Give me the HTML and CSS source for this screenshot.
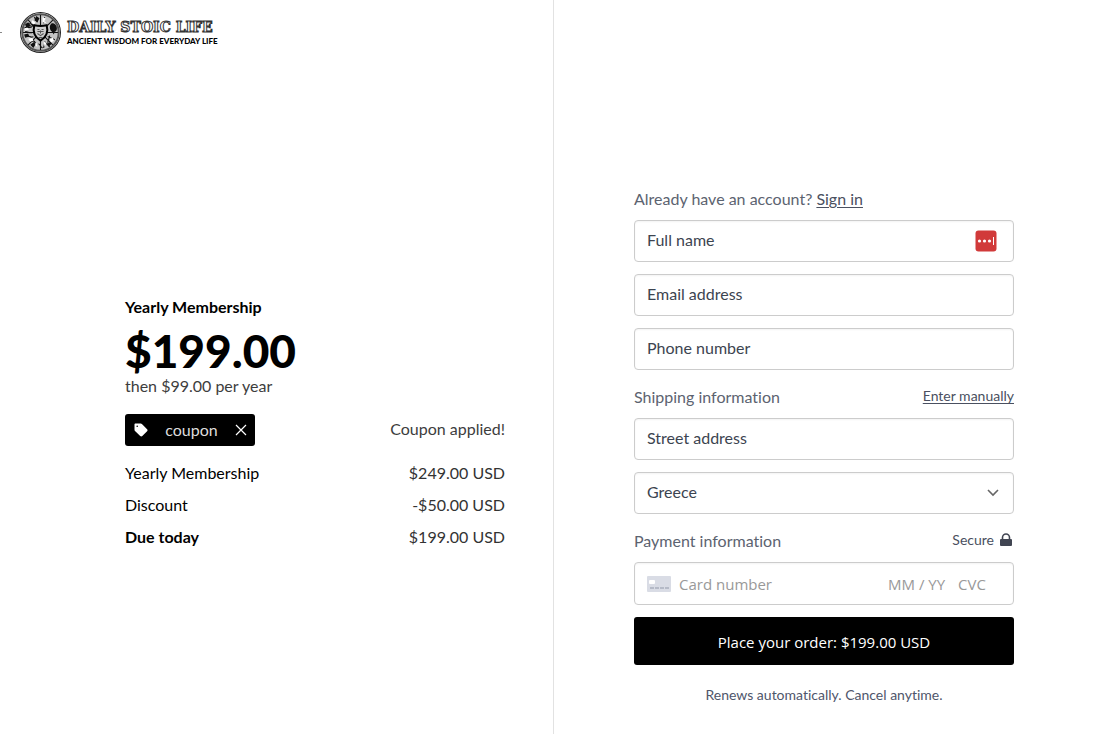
FILE: index.html
```html
<!DOCTYPE html>
<html lang="en">
  <head>
    <meta charset="UTF-8" />
    <meta name="viewport" content="width=device-width, initial-scale=1.0" />
    <title>Daily Stoic Life - Checkout</title>
    <link rel="stylesheet" href="styles.css">
  </head>
  <body>
    <div class="checkout">
      <!-- Order summary -->
      <section class="summary">
        <header class="brand">
          <span class="brand-mark"></span>
          <svg class="brand-seal" viewBox="0 0 40 40" aria-hidden="true">
            <circle cx="20" cy="20" r="19.5" fill="#fff" stroke="#222" stroke-width="1"/>
            <circle cx="20" cy="20" r="17.8" fill="#c4c4c4" stroke="#555" stroke-width="2"/>
            <g fill="none" stroke="#111" stroke-width="1.1">
              <path d="M20 3v10M20 27v10M3 20h11M26 20h11M8 8l8 8M32 8l-8 8M8 32l8-8M32 32l-8-8"/>
              <path d="M4 16c3-3 5 1 8-2M6 24c3-2 4 2 7 0M11 29c2-2 5 0 4 4M9 11c3 0 2 3 5 3M24 29l5 5M27 24l7 3M29 23l-2 7"/>
              <path d="M14 5l3 5M24 5l-1 6M18 31c3 1 1 3 4 4M24 31l-1 4M5 19c3 0 4 2 7 1"/>
            </g>
            <g fill="#fff">
              <path d="M22 5l3 1-1 3 2 2-4-1zM12 8l3 2-1 2-3-1zM4 16l3-1 2 2-4 1zM8 26l4-1 1 3-3 1zM13 32l3-2 1 4zM23 29l3 1-2 4zM29 26l3-1 1 3-3 2z"/>
            </g>
            <g fill="#111">
              <path d="M31 11c3 0 5 2 5 5 0 2-1 3-2 3l-1 3-2-3c-2-1-3-6 0-8z"/>
              <path d="M16 4l3 2-2 4-3-2zM5 12l3-2 3 4-5 1zM4 22l4-1 1 3-4 1zM10 32l4-3 1 3-2 3zM26 31l4-2 1 2-3 3z"/>
            </g>
            <path d="M14 13c4 1 8 1 12 0 2 7-1 12-6 15-5-3-8-8-6-15z" fill="#ccc" stroke="#000" stroke-width="2"/>
            <path d="M17 17h2M21 17h2M20 18v3M17 21l3 2 3-2M18 25h4M17 19h6" fill="none" stroke="#555"/>
          </svg>
          <div class="brand-text">
            <span class="brand-name">DAILY STOIC LIFE</span>
            <span class="brand-tagline">ANCIENT WISDOM FOR EVERYDAY LIFE</span>
          </div>
        </header>

        <div class="order">
          <h1 class="order-title">Yearly Membership</h1>
          <div class="order-price">$199.00</div>
          <div class="order-renewal">then $99.00 per year</div>

          <div class="coupon-row">
            <div class="coupon">
              <svg class="coupon-tag" viewBox="0 0 14 14" aria-hidden="true">
                <path fill="#fff" fill-rule="evenodd" d="M1.5.5h5.2c.5 0 .9.2 1.2.5l5.2 5.2c.6.6.6 1.5 0 2.1l-4.8 4.8c-.6.6-1.5.6-2.1 0L1 7.900C.7 7.600.5 7.200.5 6.700V1.500c0-.6.4-1 1-1zM3.200 2.400a.8.8 0 1 0 0 1.600.8.8 0 0 0 0-1.600z"/>
              </svg>
              <span class="coupon-code">coupon</span>
              <button type="button" class="coupon-remove" aria-label="Remove coupon">
                <svg viewBox="0 0 12 12" aria-hidden="true"><path d="M1 1l10 10M11 1L1 11" fill="none" stroke="#fff" stroke-width="1.2"/></svg>
              </button>
            </div>
            <span class="coupon-status">Coupon applied!</span>
          </div>

          <table class="totals">
            <tr>
              <th scope="row">Yearly Membership</th>
              <td>$249.00 USD</td>
            </tr>
            <tr>
              <th scope="row">Discount</th>
              <td>-$50.00 USD</td>
            </tr>
            <tr class="due">
              <th scope="row">Due today</th>
              <td>$199.00 USD</td>
            </tr>
          </table>
        </div>
      </section>

      <!-- Payment form -->
      <main class="payment">
        <form class="payment-form">
          <div class="form-heading">
            <span>Already have an account? <a href="#signin">Sign in</a></span>
          </div>
          <div class="field">
            <input type="text" id="name" name="name" aria-label="Full name" placeholder="Full name">
            <svg class="field-manager" viewBox="0 0 22 22" aria-hidden="true">
              <rect x="0.500" y="0.500" width="21" height="21" rx="3" fill="#d13a3a"/>
              <circle cx="4.500" cy="11" r="1.600" fill="#fff"/>
              <circle cx="9.500" cy="11" r="1.600" fill="#fff"/>
              <circle cx="14.500" cy="11" r="1.600" fill="#fff"/>
              <path d="M18.500 7v8" stroke="#fff" stroke-width="1"/>
            </svg>
          </div>
          <div class="field">
            <input type="email" id="email" name="email" aria-label="Email address" placeholder="Email address">
          </div>
          <div class="field">
            <input type="tel" id="phone" name="phone" aria-label="Phone number" placeholder="Phone number">
          </div>

          <div class="form-heading">
            <span>Shipping information</span>
            <a class="small" href="#manual">Enter manually</a>
          </div>
          <div class="field">
            <input type="text" id="address" name="address" aria-label="Street address" placeholder="Street address">
          </div>
          <div class="field field-select">
            <select id="country" name="country" aria-label="Country">
              <option selected>Greece</option>
            </select>
            <svg class="field-chevron" viewBox="0 0 12 8" aria-hidden="true"><path d="M1 1l5 5 5-5" fill="none" stroke="#666" stroke-width="1.600"/></svg>
          </div>

          <div class="form-heading">
            <span>Payment information</span>
            <span class="small secure">Secure
              <svg class="lock" viewBox="0 0 12 14" aria-hidden="true">
                <rect x="0" y="6" width="12" height="7" rx="1" fill="#414552"/>
                <path d="M2.500 7V4.500a3.500 3.500 0 0 1 7 0V7" fill="none" stroke="#414552" stroke-width="1.600"/>
              </svg>
            </span>
          </div>
          <div class="field field-card">
            <svg class="card-icon" viewBox="0 0 24 16" aria-hidden="true">
              <rect width="24" height="16" rx="1" fill="#d9dce5"/>
              <rect x="2" y="4" width="6" height="4" rx="1" fill="#fff"/>
              <path d="M3 12h4M8 12h4M13 12h4M18 12h4" stroke="#a9afbd" stroke-width="1.500"/>
            </svg>
            <input type="text" class="card-number" name="card" aria-label="Card number" placeholder="Card number">
            <input type="text" class="card-expiry" name="expiry" aria-label="Expiry date" placeholder="MM / YY">
            <input type="text" class="card-cvc" name="cvc" aria-label="CVC" placeholder="CVC">
          </div>

          <button type="submit" class="submit">Place your order: $199.00 USD</button>
          <p class="note">Renews automatically. Cancel anytime.</p>
        </form>
      </main>
    </div>
  </body>
</html>
```
FILE: styles.css
```css
* {
  box-sizing: border-box;
}

body {
  margin: 0;
  background-color: #fff;
  color: #000;
  font-family: Lato, sans-serif;
  font-size: 16px;
  line-height: 24px;
  font-variant-ligatures: none;
}

.checkout {
  display: grid;
  grid-template-columns: 554fr 557fr;
  min-height: 100vh;
}

.summary {
  border-right: 1px solid #e2e2e2;
}

/* Logo */
.brand {
  display: flex;
  align-items: center;
  padding-top: 12px;
}

.brand-mark {
  width: 2px;
  height: 1px;
  margin-right: 18px;
  background-color: #888;
}

.brand-seal {
  width: 41px;
  height: 41px;
  margin-right: 6px;
}

.brand-text {
  display: flex;
  flex-direction: column;
}

.brand-name {
  font-family: "DejaVu Serif", serif;
  font-size: 14px;
  line-height: 16px;
  font-weight: bold;
  color: #fff;
  -webkit-text-stroke: 1px #333;
}

.brand-tagline {
  font-size: 8px;
  line-height: 12px;
  font-weight: 900;
}

/* Order */
.order {
  max-width: 428px;
  margin-left: auto;
  padding: 242px 48px 0 0;
}

.order-title {
  margin: 0;
  font-size: 16px;
}

.order-price {
  padding-top: 8px;
  font-size: 46px;
  line-height: 47px;
  font-weight: 900;
}

.order-renewal,
.coupon-status {
  color: #3d3d3d;
}

.coupon-row {
  display: flex;
  align-items: center;
  justify-content: space-between;
  margin: 16px 0 11px;
}

.coupon-status {
  padding-bottom: 2px;
}

.coupon {
  display: flex;
  align-items: center;
  width: 130px;
  height: 32px;
  padding: 0 8px 0 9px;
  border-radius: 3px;
  background-color: #000;
  color: #ddd;
}

.coupon-tag {
  width: 14px;
  height: 14px;
}

.coupon-code {
  flex: 1;
  text-align: center;
}

.coupon-remove {
  display: flex;
  padding: 0;
  border: none;
  background: none;
  cursor: pointer;
}

.coupon-remove svg {
  width: 12px;
  height: 12px;
}

.totals {
  width: 100%;
  border-collapse: collapse;
}

.totals th,
.totals td {
  padding: 4px 0;
  font-weight: normal;
  text-align: left;
}

.totals td {
  color: #333;
  text-align: right;
}

.totals .due th {
  font-weight: bold;
}

/* Form */
.payment {
  padding: 187px 24px 24px 80px;
}

.payment-form {
  max-width: 380px;
}

.form-heading {
  display: flex;
  align-items: flex-start;
  justify-content: space-between;
  margin: 15px 0 9px;
  color: #5c6370;
}

.form-heading:first-child {
  margin-top: 0;
}

.form-heading a {
  color: #4a5060;
  text-underline-offset: 2px;
}

.small {
  font-size: 14px;
  line-height: 22px;
}

.secure {
  display: flex;
  align-items: center;
  gap: 6px;
  padding-right: 2px;
  color: #4a5060;
}

.lock {
  width: 12px;
  height: 14px;
}

.field {
  display: flex;
  align-items: center;
  height: 42px;
  margin-bottom: 12px;
  padding: 0 12px;
  border: 1px solid #ccc;
  border-radius: 4px;
  background-color: #fff;
  box-shadow: inset 0 1px 2px rgba(0, 0, 0, 0.05);
}

.field input,
.field select {
  flex: 1;
  min-width: 0;
  height: 100%;
  padding: 0 0 4px;
  border: none;
  outline: none;
  background: none;
  color: #3c4450;
  font: inherit;
  appearance: none;
}

.field select {
  padding-bottom: 2px;
}

.field input::placeholder {
  color: #3c4450;
  opacity: 1;
}

.field-manager {
  width: 22px;
  height: 22px;
  margin-right: 4px;
}

/* the chevron lies over the select */
.field-select {
  position: relative;
}

.field-chevron {
  position: absolute;
  right: 14px;
  width: 12px;
  height: 8px;
  pointer-events: none;
}

.field-card {
  height: 43px;
}

.field-card input {
  padding: 0;
  font-family: "Open Sans", sans-serif;
  font-size: 15px;
}

.field-card input::placeholder {
  color: #999;
}

.card-icon {
  width: 24px;
  height: 16px;
  margin-right: 8px;
}

.field-card .card-expiry {
  flex: 0 0 70px;
}

.field-card .card-cvc {
  flex: 0 0 43px;
}

.submit {
  display: block;
  width: 100%;
  height: 48px;
  padding: 2px 0 0;
  border: none;
  border-radius: 3px;
  background-color: #000;
  color: #fff;
  font-family: "Open Sans", sans-serif;
  font-size: 15px;
  cursor: pointer;
}

.note {
  margin: 18px 0 0;
  color: #4f566b;
  font-size: 14px;
  text-align: center;
}
```
